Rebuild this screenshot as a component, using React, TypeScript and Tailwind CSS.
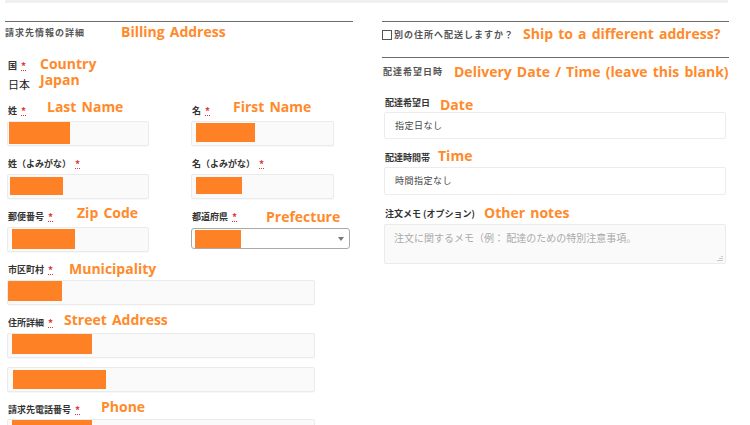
import React from 'react';

type Kids = { children: React.ReactNode; className?: string };

function Note({ children, className = '' }: Kids) {
  return (
    <span
      className={`whitespace-nowrap font-['Open_Sans',sans-serif] text-[14px] font-bold leading-[16px] text-[#ff8a2b] [word-spacing:1.5px] ${className}`}
    >
      {children}
    </span>
  );
}

function Req() {
  return (
    <abbr className="ml-[4px] border-b border-dotted border-[#e4363a] text-[10px] leading-[9px] text-[#e4363a] no-underline">
      *
    </abbr>
  );
}

function Label({ children, className = '' }: Kids) {
  return (
    <span className={`flex shrink-0 items-center pl-[1px] text-[9px] font-bold text-[#333] ${className}`}>
      {children}
    </span>
  );
}

function Redact({ className = '' }: { className?: string }) {
  return <div className={`bg-[#ff8126] ${className}`} />;
}

function Box({ children, className = '' }: Kids) {
  return (
    <div
      className={`h-[25px] overflow-hidden rounded-[2px] border border-[#ebebeb] bg-[#fafafa] shadow-[0_1px_1px_rgba(0,0,0,0.03)] ${className}`}
    >
      {children}
    </div>
  );
}

export default function App() {
  return (
    <div className="h-[425px] w-[750px] overflow-hidden bg-white font-['Noto_Sans_CJK_JP','Noto_Sans',sans-serif]">
      <div className="ml-[5px] h-[3px] w-[723px] bg-[#f0f0f0]" />

      <div className="mt-[18px] flex gap-[29px] pl-[5px]">
        {/* billing */}
        <div className="w-[348px] shrink-0">
          <div className="border-t border-[#6b6b6b]" />
          <div className="flex h-[22px] items-center">
            <span className="w-[116px] shrink-0 text-[9px] font-bold tracking-[1px] text-[#555]">請求先情報の詳細</span>
            <Note className="-translate-y-[1px]">Billing Address</Note>
          </div>

          <div className="mt-[14px] flex px-[2px]">
            <div className="w-[33px] shrink-0 pl-[1px]">
              <div className="flex h-[16px] items-center text-[9px] font-bold text-[#333]">
                国<Req />
              </div>
              <div className="mt-[1px] flex h-[18px] items-center text-[11px] text-[#222]">日本</div>
            </div>
            <div className="-mt-[2px]">
              <Note className="block leading-[14px]">
                Country
                <br />
                Japan
              </Note>
            </div>
          </div>

          <div className="mt-[10px] grid grid-cols-[143px_159px] gap-x-[41px] gap-y-[10px] px-[2px]">
            <div>
              <div className="flex h-[16px] items-center">
                <Label className="w-[40px]">
                  姓<Req />
                </Label>
                <Note className="-translate-y-[4px]">Last Name</Note>
              </div>
              <Box className="mt-[2px] w-[142px]">
                <Redact className="ml-[1px] mt-[0px] h-[22px] w-[61px]" />
              </Box>
            </div>
            <div>
              <div className="flex h-[16px] items-center">
                <Label className="w-[42px]">
                  名<Req />
                </Label>
                <Note className="-translate-y-[4px]">First Name</Note>
              </div>
              <Box className="mt-[2px] w-[143px]">
                <Redact className="ml-[4px] mt-[1px] h-[19px] w-[59px]" />
              </Box>
            </div>

            <div>
              <div className="flex h-[16px] items-center">
                <Label>
                  姓（よみがな）<Req />
                </Label>
              </div>
              <Box className="mt-[2px] w-[142px]">
                <Redact className="ml-[2px] mt-[2px] h-[18px] w-[53px]" />
              </Box>
            </div>
            <div>
              <div className="flex h-[16px] items-center">
                <Label>
                  名（よみがな）<Req />
                </Label>
              </div>
              <Box className="mt-[2px] w-[143px]">
                <Redact className="ml-[4px] mt-[2px] h-[17px] w-[46px]" />
              </Box>
            </div>

            <div>
              <div className="flex h-[16px] items-center">
                <Label className="w-[70px]">
                  郵便番号<Req />
                </Label>
                <Note className="-translate-y-[4px]">Zip Code</Note>
              </div>
              <Box className="mt-[2px] w-[142px]">
                <Redact className="ml-[4px] mt-[1px] h-[20px] w-[63px]" />
              </Box>
            </div>
            <div>
              <div className="flex h-[16px] items-center">
                <Label className="w-[75px]">
                  都道府県<Req />
                </Label>
                <Note>Prefecture</Note>
              </div>
              <div className="mt-[3px] flex h-[21px] w-[159px] items-center justify-between rounded-[3px] border border-[#a9a9a9] bg-white pl-[3px] pr-[5px]">
                <Redact className="h-[18px] w-[46px]" />
                <svg width="6" height="4" viewBox="0 0 6 4">
                  <path d="M0 0h6L3 4z" fill="#777" />
                </svg>
              </div>
            </div>
          </div>

          <div className="mt-[10px] px-[2px]">
            <div className="flex h-[16px] items-center">
              <Label className="w-[62px]">
                市区町村<Req />
              </Label>
              <Note className="-translate-y-[1px]">Municipality</Note>
            </div>
            <Box className="mt-[2px] w-[308px]">
              <Redact className="mt-[0px] h-[20px] w-[54px]" />
            </Box>

            <div className="mt-[10px] flex h-[16px] items-center">
              <Label className="w-[57px]">
                住所詳細<Req />
              </Label>
              <Note className="-translate-y-[3px]">Street Address</Note>
            </div>
            <Box className="mt-[2px] w-[308px]">
              <Redact className="ml-[4px] h-[20px] w-[80px]" />
            </Box>
            <Box className="mt-[9px] w-[308px]">
              <Redact className="ml-[5px] mt-[2px] h-[19px] w-[93px]" />
            </Box>

            <div className="mt-[10px] flex h-[16px] items-center">
              <Label className="w-[94px]">
                請求先電話番号<Req />
              </Label>
              <Note className="-translate-y-[3px]">Phone</Note>
            </div>
            <Box className="mt-[1px] w-[308px]">
              <Redact className="ml-[4px] mt-[0px] h-[20px] w-[80px]" />
            </Box>
          </div>
        </div>

        {/* shipping */}
        <div className="w-[347px] shrink-0">
          <div className="border-t border-[#6b6b6b]" />
          <div className="flex h-[25px] items-center">
            <div className="flex w-[141px] shrink-0 items-center">
              <span className="h-[10px] w-[10px] border border-[#555] bg-white" />
              <span className="ml-[2px] text-[9px] font-bold tracking-[1px] text-[#555]">別の住所へ配送しますか？</span>
            </div>
            <Note className="-translate-y-[1px]">Ship to a different address?</Note>
          </div>
          <div className="mt-[10px] border-t border-[#6b6b6b]" />
          <div className="flex h-[27px] items-center">
            <span className="w-[72px] shrink-0 pl-[1px] text-[9px] font-bold tracking-[1px] text-[#555]">配達希望日時</span>
            <Note>Delivery Date / Time (leave this blank)</Note>
          </div>

          <div className="mt-[10px] px-[2px]">
            <div className="flex h-[16px] items-center">
              <Label className="w-[56px]">配達希望日</Label>
              <Note className="translate-y-[2px]">Date</Note>
            </div>
            <div className="mt-[1px] flex h-[27px] w-[342px] items-center rounded-[2px] border border-[#ececec] bg-white pl-[10px] text-[9px] tracking-[0.5px] text-[#444]">
              指定日なし
            </div>

            <div className="mt-[11px] flex h-[16px] items-center">
              <Label className="w-[54px]">配達時間帯</Label>
              <Note className="-translate-y-[2px]">Time</Note>
            </div>
            <div className="mt-[1px] flex h-[28px] w-[342px] items-center rounded-[2px] border border-[#ececec] bg-white pl-[10px] text-[9px] tracking-[0.5px] text-[#444]">
              時間指定なし
            </div>

            <div className="mt-[11px] flex h-[16px] items-center">
              <Label className="w-[100px]">注文メモ (オプション)</Label>
              <Note className="-translate-y-[1px]">Other notes</Note>
            </div>
            <div className="relative mt-[2px] h-[40px] w-[342px] rounded-[2px] border border-[#ebebeb] bg-[#fafafa] pl-[9px] pt-[5px] text-[10px] text-[#aaa]">
              注文に関するメモ（例： 配達のための特別注意事項。
              <svg className="absolute bottom-[2px] right-[2px]" width="6" height="6" viewBox="0 0 6 6">
                <path d="M5 1v1M3 3v1M5 3v1M1 5v1M3 5v1M5 5v1" stroke="#999" strokeWidth="1" />
              </svg>
            </div>
          </div>
        </div>
      </div>
    </div>
  );
}
